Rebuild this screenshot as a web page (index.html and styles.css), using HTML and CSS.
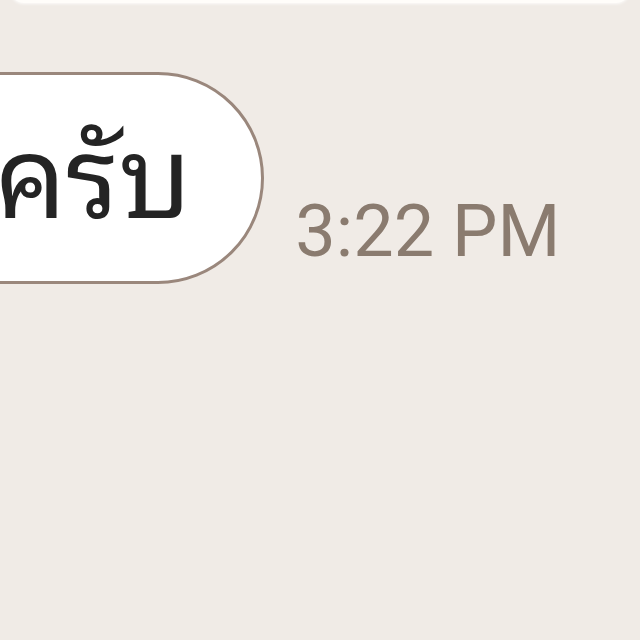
FILE: index.html
```html
<!DOCTYPE html>
<html lang="th">
<head>
<meta charset="utf-8">
<link rel="stylesheet" href="styles.css">
</head>
<body>
<div class="chat">
  <div class="prev-bubble"></div>
  <div class="row">
    <div class="bubble"><span class="msg">ครับ</span></div>
    <div class="time">3:22 PM</div>
  </div>
</div>
</body>
</html>
```
FILE: styles.css
```css
html, body {
  margin: 0;
  padding: 0;
  background: #f0ebe6;
  width: 640px;
  height: 640px;
  overflow: hidden;
}
.chat {
  display: flex;
  flex-direction: column;
}
.prev-bubble {
  height: 50px;
  margin: -47px 10px 0 10px;
  background: #fffdfa;
  border-radius: 0 0 14px 14px;
  box-shadow: 0 1px 3px rgba(255,255,255,0.8);
}
.row {
  display: flex;
  align-items: flex-end;
  margin-top: 69px;
}
.bubble {
  box-sizing: border-box;
  height: 212px;
  margin-left: -220px;
  padding: 0 70px 20px 212px;
  background: #ffffff;
  border: 3.5px solid #9a877c;
  border-radius: 106px;
  display: flex;
  align-items: center;
}
.msg {
  font-family: "Noto Sans Thai Looped", "Loma", "Noto Sans", sans-serif;
  font-size: 112px;
  line-height: 1;
  color: #242424;
}
.time {
  font-family: Roboto, "Liberation Sans", sans-serif;
  font-size: 72px;
  line-height: 1;
  color: #8a7b6f;
  margin-left: 31px;
  margin-bottom: 16px;
}
```
